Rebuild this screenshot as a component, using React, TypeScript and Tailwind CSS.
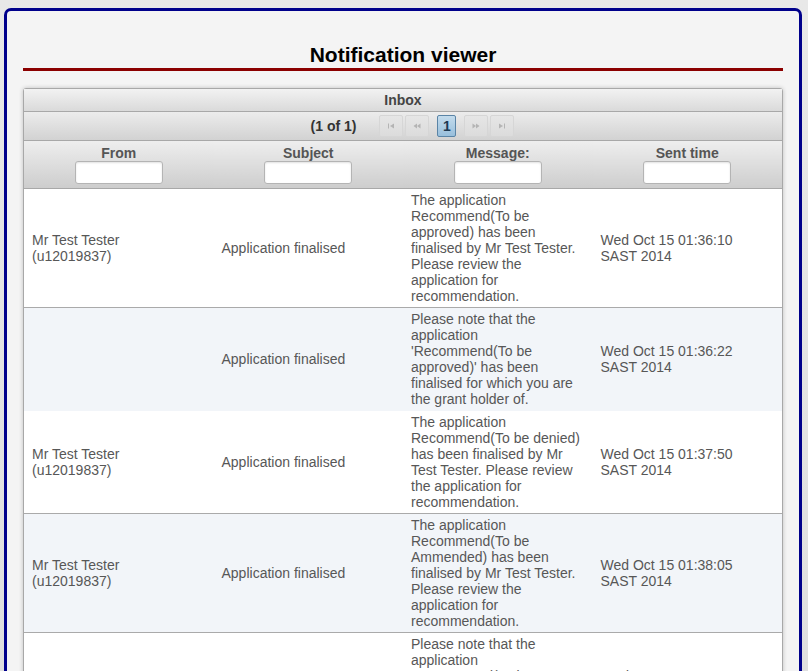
import React from 'react';

type Note = {
  from: string[];
  subject: string;
  message: string[];
  sent: string[];
  ruled: boolean;
};

// the message column keeps the line breaks that the inbox shows
const notes: Note[] = [
  {
    from: ['Mr Test Tester', '(u12019837)'],
    subject: 'Application finalised',
    message: [
      'The application',
      'Recommend(To be',
      'approved) has been',
      'finalised by Mr Test Tester.',
      'Please review the',
      'application for',
      'recommendation.',
    ],
    sent: ['Wed Oct 15 01:36:10', 'SAST 2014'],
    ruled: true,
  },
  {
    from: [],
    subject: 'Application finalised',
    message: [
      'Please note that the',
      'application',
      "'Recommend(To be",
      "approved)' has been",
      'finalised for which you are',
      'the grant holder of.',
    ],
    sent: ['Wed Oct 15 01:36:22', 'SAST 2014'],
    ruled: false,
  },
  {
    from: ['Mr Test Tester', '(u12019837)'],
    subject: 'Application finalised',
    message: [
      'The application',
      'Recommend(To be denied)',
      'has been finalised by Mr',
      'Test Tester. Please review',
      'the application for',
      'recommendation.',
    ],
    sent: ['Wed Oct 15 01:37:50', 'SAST 2014'],
    ruled: true,
  },
  {
    from: ['Mr Test Tester', '(u12019837)'],
    subject: 'Application finalised',
    message: [
      'The application',
      'Recommend(To be',
      'Ammended) has been',
      'finalised by Mr Test Tester.',
      'Please review the',
      'application for',
      'recommendation.',
    ],
    sent: ['Wed Oct 15 01:38:05', 'SAST 2014'],
    ruled: true,
  },
  {
    from: [],
    subject: 'Application finalised',
    message: [
      'Please note that the',
      'application',
      "'Recommend(To be",
      "denied)' has been",
      'finalised for which you are',
      'the grant holder of.',
    ],
    sent: ['Wed Oct 15 01:37:58', 'SAST 2014'],
    ruled: true,
  },
];

const columns = ['From', 'Subject', 'Message:', 'Sent time'];

const SeekIcon: React.FC<{ kind: 'first' | 'prev' | 'next' | 'end' }> = ({ kind }) => (
  <svg width="8" height="6" viewBox="0 0 8 6" className="fill-[#b4b4b4]">
    {kind === 'first' && (
      <>
        <rect x="1" y="0.5" width="1" height="5" />
        <polygon points="7,0.5 7,5.5 3,3" />
      </>
    )}
    {kind === 'prev' && (
      <>
        <polygon points="4,0.5 4,5.5 0.5,3" />
        <polygon points="7.5,0.5 7.5,5.5 4,3" />
      </>
    )}
    {kind === 'next' && (
      <>
        <polygon points="0.5,0.5 0.5,5.5 4,3" />
        <polygon points="4,0.5 4,5.5 7.5,3" />
      </>
    )}
    {kind === 'end' && (
      <>
        <polygon points="1,0.5 1,5.5 5,3" />
        <rect x="6" y="0.5" width="1" height="5" />
      </>
    )}
  </svg>
);

const PageButton: React.FC<{ kind: 'first' | 'prev' | 'next' | 'end' }> = ({ kind }) => (
  <span className="flex h-[22px] w-[24px] items-center justify-center rounded-[2px] border border-[#d6d6d6] bg-[linear-gradient(#e6e6e6,#dcdcdc)]">
    <SeekIcon kind={kind} />
  </span>
);

const Lines: React.FC<{ lines: string[] }> = ({ lines }) => (
  <>
    {lines.map((l, i) => (
      <div key={i} className="whitespace-nowrap">
        {l}
      </div>
    ))}
  </>
);

export default function App() {
  return (
    <div className="min-h-screen bg-[linear-gradient(#e8e8e8,#dedede)] pt-[8px] pl-[4px] font-['Liberation_Sans',Arial,sans-serif]">
      <div className="w-[798px] min-h-[700px] rounded-t-[7px] border-[3px] border-b-0 border-[#00008b] bg-[#f4f4f4] px-[16px]">
        <h1 className="border-b-[3px] border-[#8b0000] pt-[32px] pb-[1px] text-center text-[21px] leading-[24px] font-bold text-black">
          Notification viewer
        </h1>

        <div className="mt-[17px] rounded-t-[3px] border border-[#a8a8a8] bg-white shadow-[0_0_4px_rgba(0,0,0,0.22)]">
          <div className="flex h-[23px] items-center justify-center border-b border-[#a8a8a8] bg-[linear-gradient(#f2f2f2,#dadada)] pt-[1px] text-[14px] font-bold text-[#444]">
            Inbox
          </div>

          <div className="flex h-[29px] items-center justify-center border-b border-[#a8a8a8] bg-[linear-gradient(#ececec,#d2d2d2)] pl-[19px]">
            <span className="mr-[23px] text-[14px] font-bold text-[#333]">(1 of 1)</span>
            <div className="flex items-center gap-[2px]">
              <PageButton kind="first" />
              <PageButton kind="prev" />
            </div>
            <span className="mx-[8px] flex h-[22px] w-[19px] items-center justify-center rounded-[2px] border border-[#5a84a6] bg-[linear-gradient(#c3dbec,#98bfdc)] text-[14px] font-bold text-[#1e3a52]">
              1
            </span>
            <div className="flex items-center gap-[2px]">
              <PageButton kind="next" />
              <PageButton kind="end" />
            </div>
          </div>

          <table className="w-full table-fixed border-collapse text-[14px] leading-[16px]">
            <thead>
              <tr className="border-b border-[#a8a8a8] bg-[linear-gradient(#eeeeee,#cdcdcd)]">
                {columns.map((c) => (
                  <th key={c} className="px-[4px] pt-[4px] pb-[4px] text-center font-bold text-[#555]">
                    <div>{c}</div>
                    <input
                      type="text"
                      className="mx-auto block h-[23px] w-[88px] rounded-[3px] border border-[#b4b4b4] bg-white shadow-[inset_0_1px_2px_rgba(0,0,0,0.12)] outline-none"
                    />
                  </th>
                ))}
              </tr>
            </thead>
            <tbody className="text-[#575757]">
              {notes.map((n, i) => (
                <tr
                  key={i}
                  className={`border-b ${i % 2 === 1 ? 'bg-[#f2f5f9]' : 'bg-white'} ${n.ruled ? 'border-[#aaaaaa]' : 'border-[#f2f5f9]'}`}
                >
                  <td className="px-[8px] pt-[3px] pb-[3px] align-middle">
                    <Lines lines={n.from} />
                  </td>
                  <td className="px-[8px] pt-[3px] pb-[3px] align-middle">{n.subject}</td>
                  <td className="px-[8px] pt-[3px] pb-[3px] align-middle">
                    <Lines lines={n.message} />
                  </td>
                  <td className="px-[8px] pt-[3px] pb-[3px] align-middle">
                    <Lines lines={n.sent} />
                  </td>
                </tr>
              ))}
            </tbody>
          </table>
        </div>
      </div>
    </div>
  );
}
